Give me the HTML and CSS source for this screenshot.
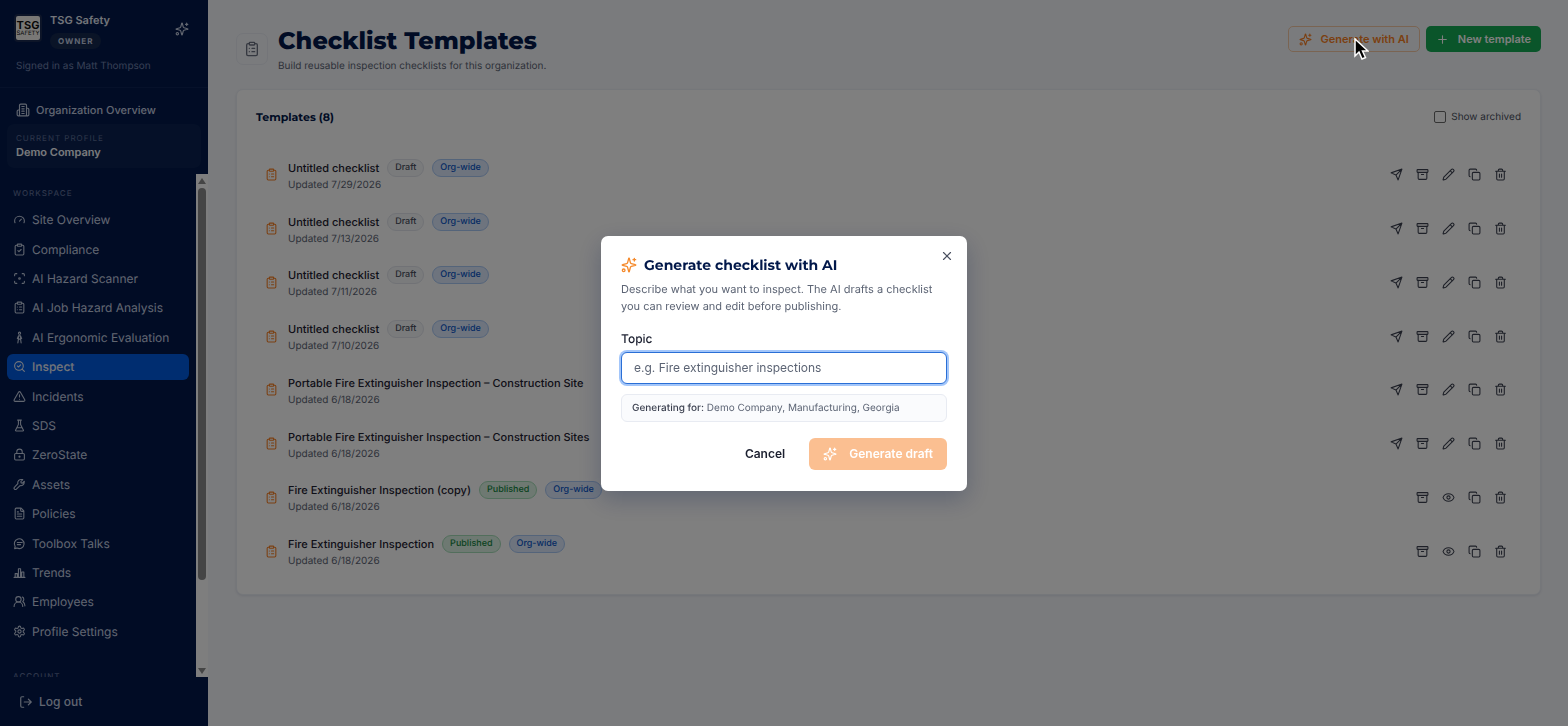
FILE: index.html
```html
<!DOCTYPE html>
<html lang="en">
<head>
    <meta charset="UTF-8">
    <meta name="viewport" content="width=device-width, initial-scale=1.0">
    <title>Checklist Templates</title>
    <link rel="stylesheet" href="styles.css">
</head>
<body>
    <!-- icon set -->
    <svg class="sprite" aria-hidden="true">
        <symbol id="sparkles" viewBox="0 0 24 24"><path d="M9.9 15.5A2 2 0 0 0 8.500 14.100L2.400 12.500a.5.5 0 0 1 0-1L8.500 9.900A2 2 0 0 0 9.900 8.500l1.600-6.100a.5.5 0 0 1 1 0L14.100 8.500a2 2 0 0 0 1.400 1.400l6.100 1.600a.5.5 0 0 1 0 1l-6.100 1.600a2 2 0 0 0-1.400 1.400l-1.600 6.100a.5.5 0 0 1-1 0z"/><path d="M20 2v4M22 4h-4"/><circle cx="4" cy="20" r="2"/></symbol>
        <symbol id="building" viewBox="0 0 24 24"><path d="M6 22V4a2 2 0 0 1 2-2h8a2 2 0 0 1 2 2v18zM6 12H4a2 2 0 0 0-2 2v6a2 2 0 0 0 2 2h2M18 9h2a2 2 0 0 1 2 2v9a2 2 0 0 1-2 2h-2M10 6h4M10 10h4M10 14h4M10 18h4"/></symbol>
        <symbol id="gauge" viewBox="0 0 24 24"><path d="m12 15 3.500-3.500M20.300 18c.4-1 .7-2.200.7-3.400C21 9.800 17 6 12 6s-9 3.800-9 8.600c0 1.200.3 2.400.7 3.400"/></symbol>
        <symbol id="clipboard-check" viewBox="0 0 24 24"><rect x="8" y="2" width="8" height="4" rx="1"/><path d="M16 4h2a2 2 0 0 1 2 2v14a2 2 0 0 1-2 2H6a2 2 0 0 1-2-2V6a2 2 0 0 1 2-2h2M9 14l2 2 4-4"/></symbol>
        <symbol id="clipboard-list" viewBox="0 0 24 24"><rect x="8" y="2" width="8" height="4" rx="1"/><path d="M16 4h2a2 2 0 0 1 2 2v14a2 2 0 0 1-2 2H6a2 2 0 0 1-2-2V6a2 2 0 0 1 2-2h2M12 11h4M12 16h4M8 11h.01M8 16h.01"/></symbol>
        <symbol id="scan" viewBox="0 0 24 24"><path d="M3 7V5a2 2 0 0 1 2-2h2M17 3h2a2 2 0 0 1 2 2v2M21 17v2a2 2 0 0 1-2 2h-2M7 21H5a2 2 0 0 1-2-2v-2"/><circle cx="12" cy="12" r="1.500"/></symbol>
        <symbol id="person" viewBox="0 0 24 24"><circle cx="12" cy="4" r="2"/><path d="M10 9h4v6h-4zM8 14l2-5M16 14l-2-5M10 15l-1 7M14 15l1 7"/></symbol>
        <symbol id="search-check" viewBox="0 0 24 24"><path d="m8 11 2 2 4-4"/><circle cx="11" cy="11" r="8"/><path d="m21 21-4.300-4.300"/></symbol>
        <symbol id="alert" viewBox="0 0 24 24"><path d="m21.700 18-8-14a2 2 0 0 0-3.500 0l-8 14A2 2 0 0 0 4 21h16a2 2 0 0 0 1.700-3M12 9v4M12 17h.01"/></symbol>
        <symbol id="flask" viewBox="0 0 24 24"><path d="M10 2v7.500a2 2 0 0 1-.2.900L4.700 20.600a1 1 0 0 0 .9 1.400h12.800a1 1 0 0 0 .9-1.400l-5.100-10.200a2 2 0 0 1-.2-.9V2M8.500 2h7M7 16h10"/></symbol>
        <symbol id="lock" viewBox="0 0 24 24"><circle cx="12" cy="16" r="1"/><rect x="3" y="10" width="18" height="12" rx="2"/><path d="M7 10V7a5 5 0 0 1 10 0v3"/></symbol>
        <symbol id="wrench" viewBox="0 0 24 24"><path d="M14.500 6.500 18 3c-4-1-8 0-9 4-.4 1.500-.2 2.500 0 3.500L2.800 17a2.500 2.500 0 0 0 3.500 3.600L13 14c4 1 8-2 8-8l-3.500 3.500-2.500-.5z"/></symbol>
        <symbol id="file" viewBox="0 0 24 24"><path d="M15 2H6a2 2 0 0 0-2 2v16a2 2 0 0 0 2 2h12a2 2 0 0 0 2-2V7zM14 2v4a2 2 0 0 0 2 2h4M10 9H8M16 13H8M16 17H8"/></symbol>
        <symbol id="message" viewBox="0 0 24 24"><path d="M7 20.500 3 21.500l1-4A9 9 0 1 1 7.500 20.500M8 10h9M8 14h6"/></symbol>
        <symbol id="chart" viewBox="0 0 24 24"><path d="M2 21h20M4 14h4v7H4zM10 5h4v16h-4zM16 11h4v10h-4z"/></symbol>
        <symbol id="users" viewBox="0 0 24 24"><path d="M18 21a8 8 0 0 0-16 0"/><circle cx="10" cy="8" r="5"/><path d="M22 20c0-3.400-2-6.500-4-8a5 5 0 0 0-.5-8.300"/></symbol>
        <symbol id="settings" viewBox="0 0 24 24"><path d="M12.200 2h-.4a2 2 0 0 0-2 2v.2a2 2 0 0 1-1 1.700l-.4.300a2 2 0 0 1-2 0l-.2-.1a2 2 0 0 0-2.700.7l-.2.400a2 2 0 0 0 .7 2.700l.2.100a2 2 0 0 1 1 1.700v.500a2 2 0 0 1-1 1.800l-.2.100a2 2 0 0 0-.7 2.700l.2.400a2 2 0 0 0 2.700.7l.2-.1a2 2 0 0 1 2 0l.4.300a2 2 0 0 1 1 1.700v.200a2 2 0 0 0 2 2h.4a2 2 0 0 0 2-2v-.2a2 2 0 0 1 1-1.700l.4-.3a2 2 0 0 1 2 0l.2.100a2 2 0 0 0 2.700-.7l.2-.4a2 2 0 0 0-.7-2.700l-.2-.1a2 2 0 0 1-1-1.700v-.5a2 2 0 0 1 1-1.800l.2-.1a2 2 0 0 0 .7-2.700l-.2-.4a2 2 0 0 0-2.700-.7l-.2.100a2 2 0 0 1-2 0l-.4-.3a2 2 0 0 1-1-1.700V4a2 2 0 0 0-2-2z"/><circle cx="12" cy="12" r="3"/></symbol>
        <symbol id="logout" viewBox="0 0 24 24"><path d="M8 21H5a2 2 0 0 1-2-2V5a2 2 0 0 1 2-2h3M16 17l5-5-5-5M21 12H9"/></symbol>
        <symbol id="send" viewBox="0 0 24 24"><path d="M22 2 15 22l-4-9-9-4zM22 2 11 13"/></symbol>
        <symbol id="archive" viewBox="0 0 24 24"><rect x="2" y="3" width="20" height="5" rx="1"/><path d="M4 8v11a2 2 0 0 0 2 2h12a2 2 0 0 0 2-2V8M10 12h4"/></symbol>
        <symbol id="pencil" viewBox="0 0 24 24"><path d="M21.200 6.800a2.800 2.800 0 0 0-4-4L3.800 16.200a2 2 0 0 0-.5.800L2 21.400a.5.5 0 0 0 .6.600L7 20.700a2 2 0 0 0 .8-.5zM15 5l4 4"/></symbol>
        <symbol id="copy" viewBox="0 0 24 24"><rect x="8" y="8" width="14" height="14" rx="2"/><path d="M4 16a2 2 0 0 1-2-2V4a2 2 0 0 1 2-2h10a2 2 0 0 1 2 2"/></symbol>
        <symbol id="trash" viewBox="0 0 24 24"><path d="M3 6h18M19 6v14a2 2 0 0 1-2 2H7a2 2 0 0 1-2-2V6M8 6V4a2 2 0 0 1 2-2h4a2 2 0 0 1 2 2v2M10 11v6M14 11v6"/></symbol>
        <symbol id="eye" viewBox="0 0 24 24"><path d="M2 12.300a1 1 0 0 1 0-.6 10.800 10.800 0 0 1 20 0 1 1 0 0 1 0 .6 10.800 10.800 0 0 1-20 0"/><circle cx="12" cy="12" r="3"/></symbol>
        <symbol id="plus" viewBox="0 0 24 24"><path d="M5 12h14M12 5v14"/></symbol>
        <symbol id="close" viewBox="0 0 24 24"><path d="M18 6 6 18M6 6l12 12"/></symbol>
    </svg>

    <div class="layout">
        <aside class="sidebar">
            <div class="brand">
                <div class="logo"><b>TSG</b><span>SAFETY</span></div>
                <div class="org">
                    <strong>TSG Safety</strong>
                    <span class="role">OWNER</span>
                </div>
                <button type="button" class="assist" aria-label="Assistant"><svg class="icon"><use href="#sparkles"/></svg></button>
            </div>
            <p class="signed">Signed in as Matt Thompson</p>
            <a href="#" class="overview"><svg class="icon"><use href="#building"/></svg>Organization Overview</a>
            <div class="profile">
                <span>CURRENT PROFILE</span>
                <strong>Demo Company</strong>
            </div>
            <div class="scroller">
                <nav class="nav">
                    <h2>WORKSPACE</h2>
                    <ul>
                        <li><a href="#"><svg class="icon"><use href="#gauge"/></svg>Site Overview</a></li>
                        <li><a href="#"><svg class="icon"><use href="#clipboard-check"/></svg>Compliance</a></li>
                        <li><a href="#"><svg class="icon"><use href="#scan"/></svg>AI Hazard Scanner</a></li>
                        <li><a href="#"><svg class="icon"><use href="#clipboard-list"/></svg>AI Job Hazard Analysis</a></li>
                        <li><a href="#"><svg class="icon"><use href="#person"/></svg>AI Ergonomic Evaluation</a></li>
                        <li><a href="#" class="active"><svg class="icon"><use href="#search-check"/></svg>Inspect</a></li>
                        <li><a href="#"><svg class="icon"><use href="#alert"/></svg>Incidents</a></li>
                        <li><a href="#"><svg class="icon"><use href="#flask"/></svg>SDS</a></li>
                        <li><a href="#"><svg class="icon"><use href="#lock"/></svg>ZeroState</a></li>
                        <li><a href="#"><svg class="icon"><use href="#wrench"/></svg>Assets</a></li>
                        <li><a href="#"><svg class="icon"><use href="#file"/></svg>Policies</a></li>
                        <li><a href="#"><svg class="icon"><use href="#message"/></svg>Toolbox Talks</a></li>
                        <li><a href="#"><svg class="icon"><use href="#chart"/></svg>Trends</a></li>
                        <li><a href="#"><svg class="icon"><use href="#users"/></svg>Employees</a></li>
                        <li><a href="#"><svg class="icon"><use href="#settings"/></svg>Profile Settings</a></li>
                    </ul>
                    <h2 class="account">ACCOUNT</h2>
                </nav>
                <div class="scrollbar">
                    <span class="arrow up"></span>
                    <span class="thumb"></span>
                    <span class="arrow down"></span>
                </div>
            </div>
            <button type="button" class="logout"><svg class="icon"><use href="#logout"/></svg>Log out</button>
        </aside>

        <main class="main">
            <header class="header">
                <div class="header-icon"><svg class="icon"><use href="#clipboard-list"/></svg></div>
                <div class="heading">
                    <h1>Checklist Templates</h1>
                    <p>Build reusable inspection checklists for this organization.</p>
                </div>
                <div class="buttons">
                    <button type="button" class="btn outline"><svg class="icon"><use href="#sparkles"/></svg>Generate with AI</button>
                    <button type="button" class="btn green"><svg class="icon"><use href="#plus"/></svg>New template</button>
                </div>
            </header>

            <section class="card">
                <div class="card-head">
                    <h2>Templates (8)</h2>
                    <label><input type="checkbox">Show archived</label>
                </div>
                <ul class="list">
                    <li>
                        <svg class="icon doc"><use href="#clipboard-list"/></svg>
                        <div class="info">
                            <div class="name">Untitled checklist <span class="tag">Draft</span><span class="tag blue">Org-wide</span></div>
                            <p>Updated 7/29/2026</p>
                        </div>
                        <div class="actions">
                            <button type="button" aria-label="Publish"><svg class="icon"><use href="#send"/></svg></button>
                            <button type="button" aria-label="Archive"><svg class="icon"><use href="#archive"/></svg></button>
                            <button type="button" aria-label="Edit"><svg class="icon"><use href="#pencil"/></svg></button>
                            <button type="button" aria-label="Copy"><svg class="icon"><use href="#copy"/></svg></button>
                            <button type="button" aria-label="Delete"><svg class="icon"><use href="#trash"/></svg></button>
                        </div>
                    </li>
                    <li>
                        <svg class="icon doc"><use href="#clipboard-list"/></svg>
                        <div class="info">
                            <div class="name">Untitled checklist <span class="tag">Draft</span><span class="tag blue">Org-wide</span></div>
                            <p>Updated 7/13/2026</p>
                        </div>
                        <div class="actions">
                            <button type="button" aria-label="Publish"><svg class="icon"><use href="#send"/></svg></button>
                            <button type="button" aria-label="Archive"><svg class="icon"><use href="#archive"/></svg></button>
                            <button type="button" aria-label="Edit"><svg class="icon"><use href="#pencil"/></svg></button>
                            <button type="button" aria-label="Copy"><svg class="icon"><use href="#copy"/></svg></button>
                            <button type="button" aria-label="Delete"><svg class="icon"><use href="#trash"/></svg></button>
                        </div>
                    </li>
                    <li>
                        <svg class="icon doc"><use href="#clipboard-list"/></svg>
                        <div class="info">
                            <div class="name">Untitled checklist <span class="tag">Draft</span><span class="tag blue">Org-wide</span></div>
                            <p>Updated 7/11/2026</p>
                        </div>
                        <div class="actions">
                            <button type="button" aria-label="Publish"><svg class="icon"><use href="#send"/></svg></button>
                            <button type="button" aria-label="Archive"><svg class="icon"><use href="#archive"/></svg></button>
                            <button type="button" aria-label="Edit"><svg class="icon"><use href="#pencil"/></svg></button>
                            <button type="button" aria-label="Copy"><svg class="icon"><use href="#copy"/></svg></button>
                            <button type="button" aria-label="Delete"><svg class="icon"><use href="#trash"/></svg></button>
                        </div>
                    </li>
                    <li>
                        <svg class="icon doc"><use href="#clipboard-list"/></svg>
                        <div class="info">
                            <div class="name">Untitled checklist <span class="tag">Draft</span><span class="tag blue">Org-wide</span></div>
                            <p>Updated 7/10/2026</p>
                        </div>
                        <div class="actions">
                            <button type="button" aria-label="Publish"><svg class="icon"><use href="#send"/></svg></button>
                            <button type="button" aria-label="Archive"><svg class="icon"><use href="#archive"/></svg></button>
                            <button type="button" aria-label="Edit"><svg class="icon"><use href="#pencil"/></svg></button>
                            <button type="button" aria-label="Copy"><svg class="icon"><use href="#copy"/></svg></button>
                            <button type="button" aria-label="Delete"><svg class="icon"><use href="#trash"/></svg></button>
                        </div>
                    </li>
                    <li>
                        <svg class="icon doc"><use href="#clipboard-list"/></svg>
                        <div class="info">
                            <div class="name">Portable Fire Extinguisher Inspection – Construction Site</div>
                            <p>Updated 6/18/2026</p>
                        </div>
                        <div class="actions">
                            <button type="button" aria-label="Publish"><svg class="icon"><use href="#send"/></svg></button>
                            <button type="button" aria-label="Archive"><svg class="icon"><use href="#archive"/></svg></button>
                            <button type="button" aria-label="Edit"><svg class="icon"><use href="#pencil"/></svg></button>
                            <button type="button" aria-label="Copy"><svg class="icon"><use href="#copy"/></svg></button>
                            <button type="button" aria-label="Delete"><svg class="icon"><use href="#trash"/></svg></button>
                        </div>
                    </li>
                    <li>
                        <svg class="icon doc"><use href="#clipboard-list"/></svg>
                        <div class="info">
                            <div class="name">Portable Fire Extinguisher Inspection – Construction Sites</div>
                            <p>Updated 6/18/2026</p>
                        </div>
                        <div class="actions">
                            <button type="button" aria-label="Publish"><svg class="icon"><use href="#send"/></svg></button>
                            <button type="button" aria-label="Archive"><svg class="icon"><use href="#archive"/></svg></button>
                            <button type="button" aria-label="Edit"><svg class="icon"><use href="#pencil"/></svg></button>
                            <button type="button" aria-label="Copy"><svg class="icon"><use href="#copy"/></svg></button>
                            <button type="button" aria-label="Delete"><svg class="icon"><use href="#trash"/></svg></button>
                        </div>
                    </li>
                    <li>
                        <svg class="icon doc"><use href="#clipboard-list"/></svg>
                        <div class="info">
                            <div class="name">Fire Extinguisher Inspection (copy) <span class="tag published">Published</span><span class="tag blue">Org-wide</span></div>
                            <p>Updated 6/18/2026</p>
                        </div>
                        <div class="actions">
                            <button type="button" aria-label="Archive"><svg class="icon"><use href="#archive"/></svg></button>
                            <button type="button" aria-label="View"><svg class="icon"><use href="#eye"/></svg></button>
                            <button type="button" aria-label="Copy"><svg class="icon"><use href="#copy"/></svg></button>
                            <button type="button" aria-label="Delete"><svg class="icon"><use href="#trash"/></svg></button>
                        </div>
                    </li>
                    <li>
                        <svg class="icon doc"><use href="#clipboard-list"/></svg>
                        <div class="info">
                            <div class="name">Fire Extinguisher Inspection <span class="tag published">Published</span><span class="tag blue">Org-wide</span></div>
                            <p>Updated 6/18/2026</p>
                        </div>
                        <div class="actions">
                            <button type="button" aria-label="Archive"><svg class="icon"><use href="#archive"/></svg></button>
                            <button type="button" aria-label="View"><svg class="icon"><use href="#eye"/></svg></button>
                            <button type="button" aria-label="Copy"><svg class="icon"><use href="#copy"/></svg></button>
                            <button type="button" aria-label="Delete"><svg class="icon"><use href="#trash"/></svg></button>
                        </div>
                    </li>
                </ul>
            </section>
        </main>
    </div>

    <div class="overlay">
        <form class="modal" role="dialog" aria-labelledby="modal-title">
            <button type="button" class="close" aria-label="Close"><svg class="icon"><use href="#close"/></svg></button>
            <h2 id="modal-title"><svg class="icon"><use href="#sparkles"/></svg>Generate checklist with AI</h2>
            <p class="desc">Describe what you want to inspect. The AI drafts a checklist you can review and edit before publishing.</p>
            <label for="topic">Topic</label>
            <input type="text" id="topic" placeholder="e.g. Fire extinguisher inspections">
            <p class="context"><b>Generating for:</b> Demo Company, Manufacturing, Georgia</p>
            <div class="modal-buttons">
                <button type="button" class="cancel">Cancel</button>
                <button type="submit" class="generate" disabled><svg class="icon"><use href="#sparkles"/></svg>Generate draft</button>
            </div>
        </form>
    </div>

    <svg class="cursor" viewBox="0 0 16 24" aria-hidden="true"><path d="M2 2v17l4-4 3 7 3.500-1.500-3-6.500H15z"/></svg>
</body>
</html>
```

FILE: styles.css
```css
*{
    box-sizing: border-box;
}

body{
    margin: 0;
    font-family: Inter, "Liberation Sans", sans-serif;
    font-size: 12px;
    text-rendering: geometricPrecision;
    color: #1c2030;
    background-color: #f5f7fb;
}

h1, h2, p, ul{
    margin: 0;
    padding: 0;
}

ul{
    list-style: none;
}

a{
    color: inherit;
    text-decoration: none;
}

button{
    font: inherit;
    color: inherit;
    background: none;
    border: none;
    padding: 0;
    cursor: pointer;
}

.sprite{
    display: none;
}

.icon{
    width: 14px;
    height: 14px;
    flex-shrink: 0;
    fill: none;
    stroke: currentColor;
    stroke-width: 2;
    stroke-linecap: round;
    stroke-linejoin: round;
}

.layout{
    display: flex;
    height: 100vh;
}

/* sidebar */
.sidebar{
    width: 208px;
    flex-shrink: 0;
    display: flex;
    flex-direction: column;
    background-color: #02184a;
    color: #c3cde0;
}

.brand{
    display: flex;
    gap: 8px;
    padding: 12px 19px 0 14px;
}

.logo{
    display: flex;
    flex-direction: column;
    align-items: center;
    justify-content: center;
    width: 28px;
    height: 28px;
    margin-top: 2px;
    border: 2px solid #1b2a50;
    border-radius: 4px;
    background-color: #f3f1ec;
    color: #111111;
    line-height: 1;
}

.logo b{
    font-size: 11px;
}

.logo span{
    font-size: 6px;
}

.org{
    flex: 1;
    display: flex;
    flex-direction: column;
    align-items: flex-start;
    gap: 5px;
    line-height: 16px;
    font-size: 11px;
    color: #e4e9f3;
}

.org strong{
    font-weight: 600;
}

.role{
    padding: 0 8px;
    border-radius: 8px;
    background-color: #14284f;
    color: #c3cde0;
    font-size: 8px;
    font-weight: 700;
    letter-spacing: 1px;
}

.assist{
    align-self: center;
    height: 20px;
}

.signed{
    padding: 9px 16px 13px;
    border-bottom: 1px solid #0c2355;
    font-size: 10px;
    line-height: 16px;
    color: #6f80aa;
}

.overview{
    display: flex;
    align-items: center;
    gap: 6px;
    padding: 14px 16px 6px;
    line-height: 16px;
    font-size: 11px;
    font-weight: 500;
}

.profile{
    display: flex;
    flex-direction: column;
    margin: 0 7px 6px;
    padding: 7px 9px 9px;
    border-radius: 7px;
    background-color: #0a2150;
    line-height: 14px;
}

.profile span{
    font-size: 8px;
    letter-spacing: 1px;
    color: #5d6d96;
}

.profile strong{
    font-weight: 600;
    font-size: 11px;
    color: #f4f6fb;
}

.scroller{
    flex: 1;
    min-height: 0;
    display: flex;
}

.nav{
    flex: 1;
    padding: 12px 7px 0;
    overflow: hidden;
}

.nav h2{
    padding: 0 6px;
    font-size: 8px;
    font-weight: 500;
    line-height: 14px;
    letter-spacing: 1px;
    color: #5d6d96;
}

.nav ul{
    display: grid;
    grid-auto-rows: 1fr;
    align-items: center;
    min-height: 441px;
    margin: 5px 0 23px;
}

.nav a{
    display: flex;
    align-items: center;
    gap: 6px;
    height: 26px;
    padding: 0 6px;
    border-radius: 6px;
}

.nav .icon{
    width: 13px;
    height: 13px;
}

.nav .active{
    background-color: #005ae0;
    color: #e4e9f3;
    font-weight: 500;
}

.scrollbar{
    width: 12px;
    display: flex;
    flex-direction: column;
    align-items: center;
    padding: 4px 0 3px;
    background-color: #fcfcfc;
}

.arrow{
    border: 4px solid transparent;
}

.up{
    border-top-width: 0;
    border-bottom: 6px solid #8b8b8b;
}

.down{
    border-bottom-width: 0;
    border-top: 6px solid #8b8b8b;
}

.thumb{
    width: 8px;
    height: 79%;
    margin: 4px 0 auto;
    border-radius: 4px;
    background-color: #8b8b8b;
}

.logout{
    display: flex;
    align-items: center;
    gap: 6px;
    height: 49px;
    padding: 0 19px;
    font-weight: 500;
}

/* content */
.main{
    flex: 1;
    min-width: 0;
    padding: 25px 27px 0 28px;
}

.header{
    display: flex;
    align-items: flex-start;
    gap: 10px;
    height: 64px;
}

.header-icon{
    display: flex;
    align-items: center;
    justify-content: center;
    width: 32px;
    height: 32px;
    margin-top: 8px;
    border: 1px solid #e8ebf2;
    border-radius: 7px;
    color: #6a7080;
}

.header-icon .icon{
    width: 16px;
    height: 16px;
}

.heading{
    flex: 1;
    padding-top: 1px;
}

.heading h1{
    font-family: Montserrat, Inter, sans-serif;
    font-size: 24px;
    font-weight: 800;
    line-height: 32px;
    color: #02184a;
}

.heading p{
    font-size: 10px;
    line-height: 16px;
    color: #5c6474;
}

.buttons{
    display: flex;
    gap: 6px;
    padding-top: 1px;
}

.btn{
    display: flex;
    align-items: center;
    gap: 9px;
    height: 26px;
    padding: 0 10px;
    border-radius: 5px;
    font-size: 11px;
    font-weight: 600;
}

.btn .icon{
    width: 13px;
    height: 13px;
}

.outline{
    border: 1px solid #f5c9a4;
    color: #f77f23;
}

.green{
    background-color: #15aa54;
    color: #ffffff;
}

.card{
    padding: 18px 19px 16px;
    border: 1px solid #ebeef5;
    border-radius: 7px;
    background-color: #ffffff;
    box-shadow: 0 1px 3px rgba(2,24,74,.1);
}

.card-head{
    display: flex;
    align-items: center;
    justify-content: space-between;
    height: 18px;
    margin-bottom: 22px;
}

.card-head h2{
    font-family: Montserrat, Inter, sans-serif;
    font-size: 11px;
    font-weight: 700;
    color: #02184a;
}

.card-head label{
    display: flex;
    align-items: center;
    gap: 5px;
    font-size: 10px;
    color: #4a5060;
}

.card-head input{
    appearance: none;
    width: 12px;
    height: 12px;
    margin: 0;
    border: 1px solid #6b6b6b;
    border-radius: 2px;
}

.list{
    display: grid;
    grid-auto-rows: 1fr;
    min-height: 430px;
}

.list li{
    display: flex;
    align-items: center;
    gap: 10px;
    padding: 0 8px 0 9px;
}

.list .icon{
    width: 13px;
    height: 13px;
}

.list .doc{
    color: #f77f23;
}

.info{
    flex: 1;
    padding-top: 2px;
}

.name{
    display: flex;
    align-items: center;
    gap: 8px;
    line-height: 18px;
    font-size: 11px;
    font-weight: 500;
    white-space: nowrap;
}

.info p{
    font-size: 10px;
    line-height: 16px;
    color: #5c6474;
}

.tag{
    padding: 0 7px;
    border: 1px solid #e2e5ec;
    border-radius: 9px;
    background-color: #f5f6f9;
    font-size: 9px;
    line-height: 16px;
    color: #4a5060;
}

.blue{
    border-color: #a9c8f5;
    background-color: #dce9fc;
    color: #0a55c8;
}

.published{
    border-color: #a5dcb8;
    background-color: #dcf3e4;
    color: #14853f;
}

.actions{
    display: flex;
    color: #3c4150;
}

.actions button{
    display: flex;
    align-items: center;
    justify-content: center;
    width: 26px;
    height: 26px;
}

/* modal */
.overlay{
    position: fixed;
    inset: 0;
    display: flex;
    align-items: center;
    justify-content: center;
    background-color: rgba(0,0,0,.5);
}

.modal{
    position: relative;
    width: 366px;
    padding: 19px 20px 21px;
    border-radius: 7px;
    background-color: #ffffff;
    box-shadow: 0 8px 24px rgba(2,24,74,.25);
}

.close{
    position: absolute;
    top: 13px;
    right: 13px;
    height: 14px;
    color: #4a5060;
}

.modal h2{
    display: flex;
    align-items: center;
    gap: 7px;
    font-family: Montserrat, Inter, sans-serif;
    font-size: 14px;
    font-weight: 700;
    line-height: 20px;
    color: #02184a;
}

.modal h2 .icon{
    width: 16px;
    height: 16px;
    color: #f58a2c;
}

.desc{
    margin: 6px 0 15px;
    font-size: 11px;
    line-height: 17px;
    color: #5c6474;
}

.modal label{
    display: block;
    font-weight: 500;
    line-height: 18px;
}

.modal input{
    display: block;
    width: 100%;
    height: 32px;
    margin-top: 4px;
    padding: 0 12px;
    border: 1px solid #2a6fd6;
    border-radius: 6px;
    outline: none;
    box-shadow: 0 0 0 2px #a3c6fa;
    font: inherit;
}

.modal input::placeholder{
    color: #5c6474;
}

.context{
    margin: 10px 0 16px;
    padding: 5px 10px;
    border: 1px solid #e8ebf2;
    border-radius: 6px;
    background-color: #fafbfd;
    font-size: 10px;
    line-height: 16px;
    color: #5c6474;
}

.context b{
    font-weight: 500;
    color: #3c4150;
}

.modal-buttons{
    display: flex;
    justify-content: flex-end;
    gap: 10px;
    font-weight: 600;
}

.cancel{
    height: 32px;
    padding: 0 14px;
}

.generate{
    display: flex;
    align-items: center;
    gap: 12px;
    height: 32px;
    padding: 0 14px;
    border-radius: 6px;
    background-color: #fbbf91;
    color: #ffffff;
}

.cursor{
    position: fixed;
    left: 1353px;
    top: 37px;
    width: 16px;
    height: 24px;
    fill: #000000;
    stroke: #ffffff;
    stroke-width: 1.5;
}
```
